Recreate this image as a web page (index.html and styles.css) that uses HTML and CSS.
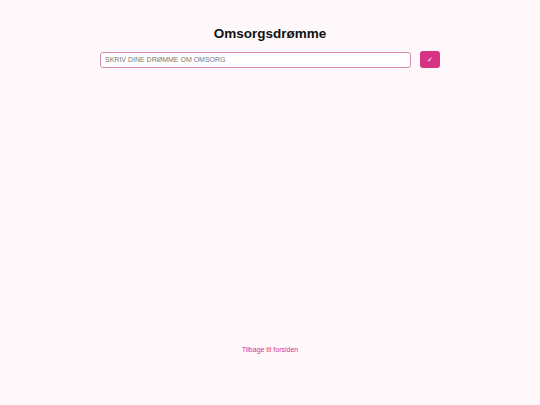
FILE: index.html
```html
<!DOCTYPE html>
<html lang="no">
<head>
<meta charset="utf-8">
<link rel="stylesheet" href="styles.css">
</head>
<body>
<div class="page">
  <main class="main">
    <h1 class="title">Omsorgsdrømme</h1>
    <form class="entry">
      <input class="entry-input" type="text" placeholder="SKRIV DINE DRØMME OM OMSORG">
      <button class="entry-btn" type="button">✓</button>
    </form>
  </main>
  <footer class="footer">
    <a class="back" href="#">Tilbage til forsiden</a>
  </footer>
</div>
</body>
</html>
```
FILE: styles.css
```css
html, body {
  margin: 0;
  padding: 0;
  background: #fff8fb;
  font-family: "Liberation Sans", Arial, sans-serif;
}
.page {
  height: 405px;
  display: flex;
  flex-direction: column;
  box-sizing: border-box;
}
.main {
  flex: 1;
  display: flex;
  flex-direction: column;
  align-items: center;
  padding-top: 26px;
}
.title {
  margin: 0 0 9px;
  font-size: 13.5px;
  font-weight: bold;
  color: #111;
  line-height: 16px;
}
.entry {
  width: 340px;
  display: flex;
  gap: 9px;
  align-items: center;
  margin: 0;
}
.entry-input {
  flex: 1;
  height: 16px;
  box-sizing: border-box;
  border: 1.5px solid #d98ab4;
  border-radius: 3px;
  background: #fff;
  padding: 0 4px;
  font-family: "Liberation Sans", Arial, sans-serif;
  font-size: 7px;
  color: #333;
  outline: none;
}
.entry-input::placeholder {
  color: #777;
}
.entry-btn {
  width: 20px;
  height: 17px;
  border: none;
  border-radius: 3px;
  background: #d63384;
  color: #fff;
  font-size: 7px;
  padding: 0;
  cursor: pointer;
}
.footer {
  display: flex;
  justify-content: center;
  padding-bottom: 52px;
}
.back {
  color: #d63384;
  font-size: 7px;
  text-decoration: none;
}
```
